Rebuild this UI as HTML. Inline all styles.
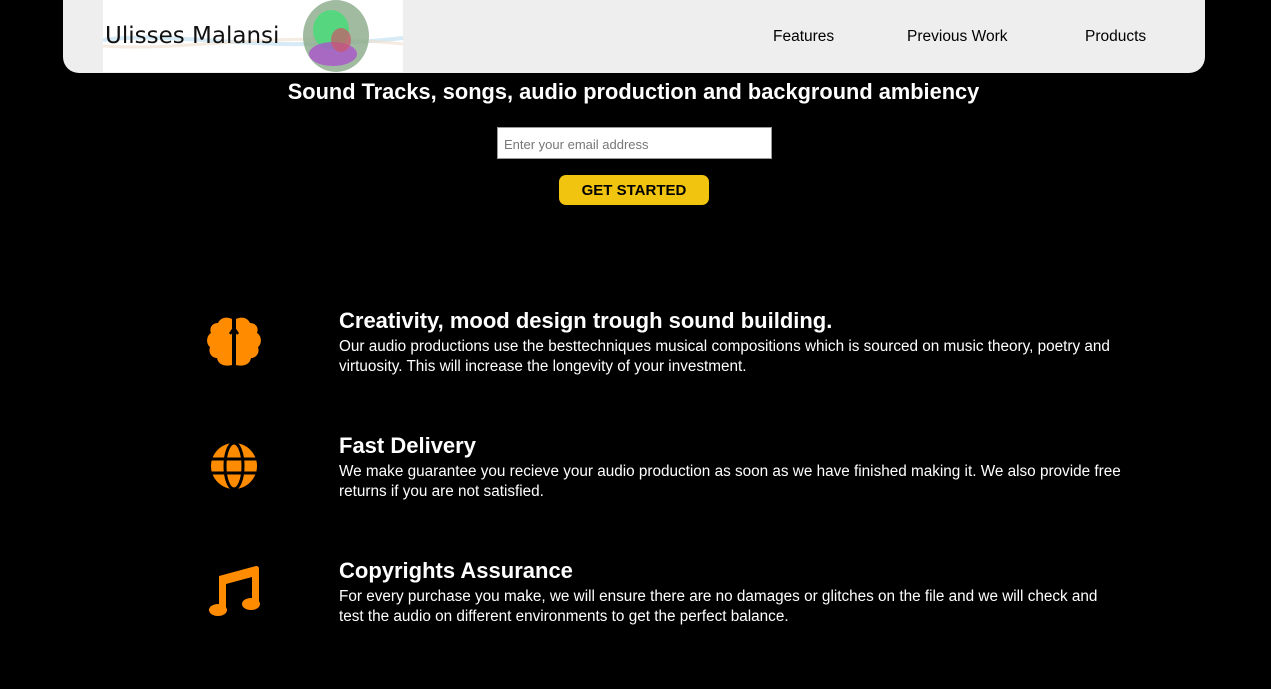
<!DOCTYPE html>
<html><head><meta charset="utf-8"><style>
*{margin:0;padding:0;box-sizing:border-box}
body{width:1271px;height:689px;background:#000;font-family:"Liberation Sans",sans-serif;color:#fff;position:relative;overflow:hidden}
.hdr{position:absolute;left:63px;top:0;width:1142px;height:73px;background:#eee;border-radius:0 0 16px 16px}
.logo{position:absolute;left:40px;top:0;width:300px;height:72px;background:#fff;overflow:hidden}
.logo span{position:absolute;left:2px;top:23px;font-family:"DejaVu Sans",sans-serif;font-size:23px;color:#111}
.nav{position:absolute;top:28px;font-size:15.5px;color:#000}
h1{position:absolute;top:79px;left:0;width:1267px;text-align:center;font-size:21.8px;font-weight:bold}
.inp{position:absolute;left:497px;top:127px;width:275px;height:32px;background:#fff;border:1px solid #999;font-size:13px;color:#777;padding:9px 6px}
.btn{position:absolute;left:559px;top:175px;width:150px;height:30px;background:#f1c40f;border-radius:7px;color:#000;font-weight:bold;font-size:15px;text-align:center;line-height:31px}
.f{position:absolute;left:339px;width:786px}
.f h2{font-size:22px;font-weight:bold;line-height:28px}
.f p{font-size:15.3px;line-height:20px;margin-top:2px}
.ic{position:absolute;left:206px;width:56px;height:52px}
</style></head><body>
<div class="hdr">
<div class="logo">
<svg width="300" height="72" style="position:absolute;left:0;top:0">
<path d="M0 40 C80 30 150 55 300 38" stroke="#bde" stroke-width="4" fill="none" opacity=".6"/>
<path d="M0 46 C90 52 160 30 300 44" stroke="#edc" stroke-width="3" fill="none" opacity=".6"/>
<ellipse cx="233" cy="36" rx="33" ry="36" fill="#8a8" opacity=".8"/>
<ellipse cx="228" cy="30" rx="18" ry="20" fill="#4d7" opacity=".8"/>
<ellipse cx="230" cy="54" rx="24" ry="12" fill="#a5c" opacity=".8"/>
<ellipse cx="238" cy="40" rx="10" ry="12" fill="#c56" opacity=".7"/>
</svg>
<span>Ulisses Malansi</span></div>
<div class="nav" style="left:710px">Features</div>
<div class="nav" style="left:844px">Previous Work</div>
<div class="nav" style="left:1022px">Products</div>
</div>
<h1>Sound Tracks, songs, audio production and background ambiency</h1>
<div class="inp">Enter your email address</div>
<div class="btn">GET STARTED</div>

<svg class="ic" style="top:316px" viewBox="0 0 56 52"><g fill="#ff8c00">
<path d="M26 3 C20 0 14 2 12 7 C6 7 3 12 5 17 C0 20 0 28 4 31 C2 37 6 42 11 42 C12 48 18 51 26 49 Z"/>
<path d="M30 3 C36 0 42 2 44 7 C50 7 53 12 51 17 C56 20 56 28 52 31 C54 37 50 42 45 42 C44 48 38 51 30 49 Z"/>
</g><path d="M28 12 L28 50 M24 18 L28 12 L32 18" stroke="#000" stroke-width="2.5" fill="none"/></svg>

<svg class="ic" style="top:440px" viewBox="0 0 56 52"><circle cx="28" cy="26" r="23" fill="#ff8c00"/>
<g stroke="#000" stroke-width="3" fill="none"><ellipse cx="28" cy="26" rx="9" ry="23"/><line x1="4" y1="19" x2="52" y2="19"/><line x1="4" y1="33" x2="52" y2="33"/></g></svg>

<svg class="ic" style="top:565px" viewBox="0 0 56 52"><g fill="#ff8c00">
<path d="M13 11 L50 1 C52 1 53 2 53 4 L53 39 L46 39 L46 12 L20 19 L20 45 L13 45 Z"/>
<ellipse cx="12" cy="45" rx="9" ry="6"/><ellipse cx="45" cy="39" rx="9" ry="6"/></g></svg>

<div class="f" style="top:307px"><h2>Creativity, mood design trough sound building.</h2><p>Our audio productions use the besttechniques musical compositions which is sourced on music theory, poetry and virtuosity. This will increase the longevity of your investment.</p></div>
<div class="f" style="top:432px"><h2>Fast Delivery</h2><p>We make guarantee you recieve your audio production as soon as we have finished making it. We also provide free returns if you are not satisfied.</p></div>
<div class="f" style="top:557px"><h2>Copyrights Assurance</h2><p>For every purchase you make, we will ensure there are no damages or glitches on the file and we will check and test the audio on different environments to get the perfect balance.</p></div>
</body></html>
